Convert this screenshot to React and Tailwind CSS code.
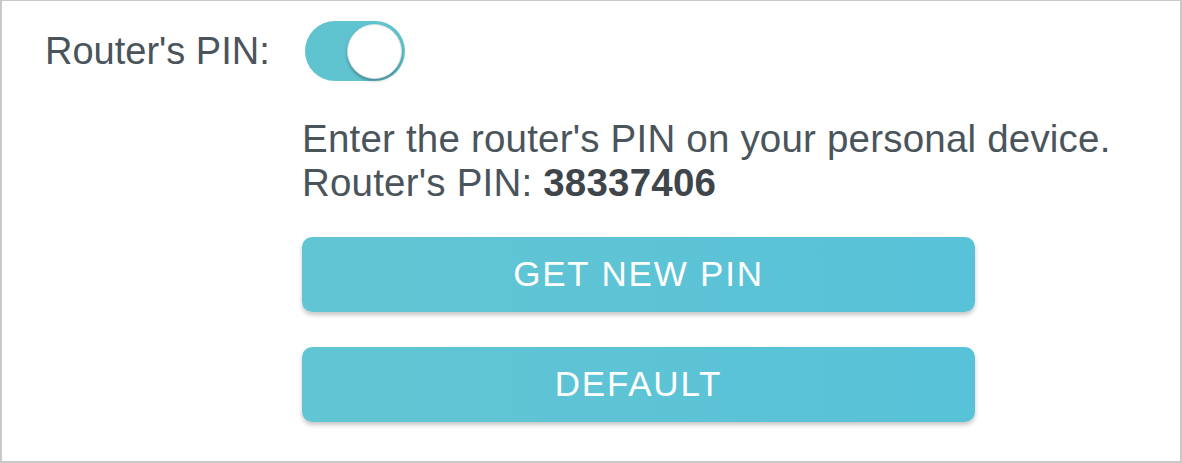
import React, { useState } from 'react';

export default function App() {
  const [enabled, setEnabled] = useState(true);

  return (
    <div className="w-[1182px] h-[463px] bg-white border-t border-l-2 border-r-2 border-b-2 border-[#c9c9c9] font-[family-name:Liberation_Sans,Arial,sans-serif] text-[#4a545b] overflow-hidden">
      {/* Router's PIN toggle row */}
      <div className="flex items-center pt-[20px] h-[80px]">
        <span className="ml-[43px] text-[38px] leading-[44px]">Router's PIN:</span>
        <button
          type="button"
          onClick={() => setEnabled(!enabled)}
          className="ml-[35px] w-[100px] h-[60px] rounded-full bg-[#5fc4d0] flex items-center px-[3px] justify-end"
        >
          <span className="block w-[55px] h-[55px] rounded-full bg-white shadow-[0_2px_3px_rgba(0,0,0,0.3)] border border-[#d6dfe1]" />
        </button>
      </div>

      <div className="pl-[300px] pt-[36px]">
        <p className="text-[38.5px] leading-[44px] tracking-[0.2px]">Enter the router's PIN on your personal device.</p>
        <p className="text-[38.5px] leading-[44px] tracking-[0.2px]">
          Router's PIN: <span className="font-bold text-[#3f464b]">38337406</span>
        </p>

        <div className="flex flex-col gap-[35px] mt-[32px]">
          <button
            type="button"
            className="w-[673px] h-[75px] rounded-[10px] bg-gradient-to-r from-[#62c5d3] to-[#58c2d8] shadow-[0_3px_4px_rgba(0,0,0,0.22)] text-white text-[35px] tracking-[1.8px] flex items-center justify-center"
          >
            GET NEW PIN
          </button>
          <button
            type="button"
            className="w-[673px] h-[75px] rounded-[10px] bg-gradient-to-r from-[#62c5d3] to-[#58c2d8] shadow-[0_3px_4px_rgba(0,0,0,0.22)] text-white text-[35px] tracking-[1.8px] flex items-center justify-center"
          >
            DEFAULT
          </button>
        </div>
      </div>
    </div>
  );
}
